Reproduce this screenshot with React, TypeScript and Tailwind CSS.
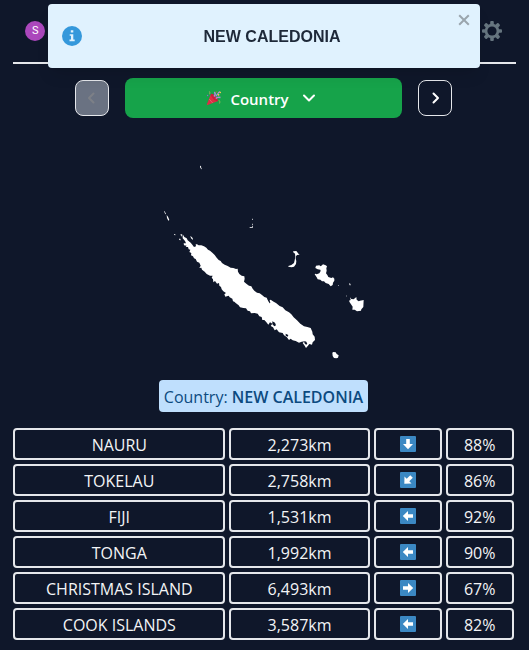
import React from "react";

type Direction = "down" | "down-left" | "left" | "right";

interface Guess {
  name: string;
  distance: string;
  direction: Direction;
  proximity: string;
}

const guesses: Guess[] = [
  { name: "NAURU", distance: "2,273km", direction: "down", proximity: "88%" },
  { name: "TOKELAU", distance: "2,758km", direction: "down-left", proximity: "86%" },
  { name: "FIJI", distance: "1,531km", direction: "left", proximity: "92%" },
  { name: "TONGA", distance: "1,992km", direction: "left", proximity: "90%" },
  { name: "CHRISTMAS ISLAND", distance: "6,493km", direction: "right", proximity: "67%" },
  { name: "COOK ISLANDS", distance: "3,587km", direction: "left", proximity: "82%" },
];

const angles: Record<Direction, number> = { right: 0, down: 90, "down-left": 135, left: 180 };

function ArrowTile({ direction }: { direction: Direction }) {
  return (
    <svg viewBox="0 0 16 16" className="size-4" role="img" aria-label={direction}>
      <rect width="16" height="16" rx="1" fill="#3b88c3" />
      <path
        d="M3 6.200h5V3L13.200 8 8 13V9.800H3z"
        fill="#fff"
        transform={`rotate(${angles[direction]} 8 8)`}
      />
    </svg>
  );
}

function Chevron({ d, className }: { d: string; className: string }) {
  return (
    <svg viewBox="0 0 16 16" className={className} fill="none" stroke="currentColor" strokeWidth="2" aria-hidden="true">
      <path d={d} strokeLinecap="round" strokeLinejoin="round" />
    </svg>
  );
}

function PartyPopper() {
  return (
    <svg viewBox="0 0 16 16" className="size-4" aria-hidden="true">
      <path d="M5 4 12 11 1.600 15c-.6.2-.9-.2-.7-.7z" fill="#dd2e44" />
      <path d="M5 4c1-.7 3.300.8 4.900 2.400s2.700 3.900 1.900 4.600-2.900-.3-4.500-2S4.200 4.800 5 4z" fill="#c9213a" />
      <path d="m3.200 9 3.500 4" stroke="#ea596e" strokeWidth="1" />
      <path d="M8 6.500c1.600-1.600 1.300-3.400.4-4.500M9.800 8.500c1.300-1.500 2.800-1.500 4.700-1" stroke="#aa8dd8" strokeWidth="1.400" fill="none" />
      <path d="M10 6.500c.4-2.500 2-2 2.200-3.400.1-1 1.200-1.200 2-1.500" stroke="#aa8dd8" strokeWidth="1.200" fill="none" />
      <path d="M3 1.500c1.200.6 1 1.700.3 2.800M12.500 10.500c2 .2 1.500 2 .8 3" stroke="#77b255" strokeWidth="1.100" fill="none" />
      <circle cx="10.500" cy="2" r=".9" fill="#5c913b" />
      <circle cx="12.500" cy="4.800" r=".9" fill="#ffcc4d" />
      <circle cx="14.200" cy="2.500" r=".8" fill="#ffcc4d" />
      <circle cx="1.600" cy="5.500" r=".7" fill="#9266cc" />
    </svg>
  );
}

function Gear() {
  return (
    <svg viewBox="0 0 20 20" className="size-5" aria-hidden="true">
      <g fill="#66757f">
        {[0, 45, 90, 135].map((a) => (
          <rect key={a} x="8.200" y="0" width="3.600" height="20" rx="1" transform={`rotate(${a} 10 10)`} />
        ))}
        <circle cx="10" cy="10" r="7.300" />
      </g>
      <circle cx="10" cy="10" r="4.600" fill="#0f172a" />
    </svg>
  );
}

function CountryShape() {
  return (
    <svg viewBox="-3 2 690 690" className="size-[230px]" fill="#fff" role="img" aria-label="Country outline">
      <g transform="translate(90 303)">
        <path d="M8 0 13 8 20 12 23 18 32 25 37 31 42 38 48 36 47 30 51 30 56 33 64 33 72 36 79 40 84 46 90 49 97 55 104 62 110 70 116 77 122 80 126 86 134 91 143 95 152 100 160 101 168 104 173 103 174 112 178 119 185 124 193 126 194 133 192 142 199 148 207 154 214 156 218 163 223 169 231 175 239 177 246 182 253 188 260 190 265 199 272 196 281 202 288 206 299 215 308 219 316 228 327 234 334 240 341 249 351 258 361 268 372 276 382 278 392 281 397 292 398 300 404 307 405 317 398 324 396 331 388 329 384 334 378 341 373 333 368 326 374 321 365 322 357 325 347 320 338 318 332 313 327 317 320 308 312 303 308 296 297 294 290 285 284 288 279 279 272 275 277 268 270 264 265 271 258 262 253 257 247 257 245 248 238 246 233 238 224 236 213 237 210 231 203 229 198 222 190 221 180 219 176 213 168 207 163 202 159 201 157 193 149 189 146 184 136 187 133 180 138 176 130 171 125 165 123 158 118 154 117 146 111 148 105 140 100 144 99 135 95 130 98 124 90 124 80 119 74 112 66 106 64 100 58 101 62 94 58 85 51 82 47 74 42 72 39 66 33 63 34 56 28 53 31 46 26 45 24 38 17 38 20 34 12 33 11 27 18 27 15 20 8 12z" />
        <path d="M31 4 38 11 39 17 33 12zM2-1 5-1 6 7 2 3zM-3 13 1 13 2 18-2 17zM-18-1-14 0-14 3-17 2zM-48-69-46-69-42-61-44-60zM-40-58-36-53-32-43-35-41-39-49zM60-206 63-205 64-197 61-199zM65-198 66-198 66-195 64-196z" />
        <path d="M217-47h2v4h-2zM217-32h2v5h-2zM218-25v6h-9v-2h7v-4z" />
        <path d="m340 51 9-1 7 9 3 2-8 1-3 4-1 7 2 7-1 9-6 8-7 2-10-2 0-2 9-3 8-6 2-8 2-11-1-9-6-5z" />
        <path d="m406 101 2-7 10-1 4 3 4-3 3-3 8 3 4 3-2 6 1 7-2 8 4 5 3 6 9 3 5-2 4 4 0 6 -4 6-1 7-6 4-6-7-9-3-5-5-6 0-5-5-8-1-3-6-6-9 2-2 4 2 8-3 4-7-1-4-8-1z" />
        <path d="m510 189 4 5 7 1 8-7 1 8 6 5 4-2 11-2-1 21-6 7-1 4-12 2-7-5-7 0 1-9-5-7-4-6-2-5 5-2zM507 147l4 1 1 5-3 0zM474 153h2v2h-2zM498 184h3v2h-3z" />
        <path d="m457 355 3-2 7 1 3 5 6 4-2 7-5 2-7-1-4-6z" />
      </g>
      <g fill="#0f172a" transform="translate(90 303)">
        <path d="m262 191 7 7 2 8-2 1-5-8zM277 261l8 4 3 8-5 3-6-6zM317 298l8 4-2 5-6-3zM373 320l6 2 3 7-4 2-5-5z" />
      </g>
    </svg>
  );
}

const cell = "flex h-8 items-center justify-center rounded border-2 border-gray-200 px-0";

export default function App() {
  return (
    <div className="min-h-screen bg-[#0f172a] font-['Segoe_UI','Open_Sans',sans-serif] text-base text-gray-100">
      <div
        role="alert"
        className="fixed top-1 right-[49px] left-12 z-10 flex h-16 items-center rounded bg-[#e0f2fe] px-3.5 font-['Liberation_Sans',sans-serif] text-gray-800 shadow-lg"
      >
        <svg viewBox="0 0 20 20" className="size-5 shrink-0" aria-hidden="true">
          <circle cx="10" cy="10" r="10" fill="#3498db" />
          <path d="M8.800 4.200h2.500v2.300H8.800zM7.700 8.200h3.600v5.400h1.400v1.600H7.500v-1.600H9V9.800H7.700z" fill="#e0f2fe" />
        </svg>
        <p className="flex-1 pt-0.5 pl-1 text-center font-bold">NEW CALEDONIA</p>
        <button type="button" aria-label="Close" className="mt-2 -mr-1 h-4 w-3 self-start text-[#9aa5ad]">
          <svg viewBox="0 0 12 16" className="h-4 w-3" fill="none" stroke="currentColor" strokeWidth="2">
            <path d="m1.200 3.200 9.600 9.600m0-9.600-9.600 9.600" />
          </svg>
        </button>
      </div>

      <div className="mx-auto flex w-[95%] flex-col">
        <header className="flex h-16 items-center justify-between border-b-2 border-gray-200 pr-3.5 pl-3">
          <button type="button" aria-label="Profile" className="flex size-5 items-center justify-center rounded-full bg-[#ab47bc] pt-px font-[Roboto,sans-serif] text-[11px] text-white">
            S
          </button>
          <button type="button" aria-label="Settings">
            <Gear />
          </button>
        </header>

        <main className="flex flex-col items-center">
          <div className="mt-3.5 mr-0.5 flex w-3/4 items-center gap-4">
            <button type="button" disabled aria-label="Previous" className="flex h-9 w-[34px] shrink-0 items-center justify-center rounded-lg border border-gray-200 bg-gray-500 text-[#7d8087]">
              <Chevron className="size-4" d="M9.500 3.500 5 8l4.500 4.500" />
            </button>
            <button type="button" className="flex h-10 flex-1 items-center justify-center rounded-lg bg-[#16a34a] pr-1 text-[15px] font-semibold text-white">
              <PartyPopper />
              <span className="ml-2 pt-0.5">Country</span>
              <Chevron className="ml-3 size-4" d="m3 5.500 5 5 5-5" />
            </button>
            <button type="button" aria-label="Next" className="flex h-9 w-[34px] shrink-0 items-center justify-center rounded-lg border border-gray-200 text-white">
              <Chevron className="size-4" d="M6.500 3.500 11 8l-4.500 4.500" />
            </button>
          </div>

          <div className="mt-4">
            <CountryShape />
          </div>

          <p className="mt-4 mr-0.5 rounded bg-[#bfdffd] px-[5px] pt-[5px] pb-[3px] text-[#0c4a80]">
            Country: <span className="font-semibold">NEW CALEDONIA</span>
          </p>

          <table className="mt-4 block w-full pr-0.5">
            <tbody className="flex flex-col gap-1">
              {guesses.map((g) => (
                <tr key={g.name} className="grid grid-cols-7 gap-1">
                  <td className={`col-span-3 pt-0.5 pb-0 ${cell}`}>{g.name}</td>
                  <td className={`col-span-2 pt-0.5 pb-0 ${cell}`}>{g.distance}</td>
                  <td className={`py-0 ${cell}`}>
                    <ArrowTile direction={g.direction} />
                  </td>
                  <td className={`pt-0.5 pb-0 ${cell}`}>{g.proximity}</td>
                </tr>
              ))}
            </tbody>
          </table>
        </main>
      </div>
    </div>
  );
}
